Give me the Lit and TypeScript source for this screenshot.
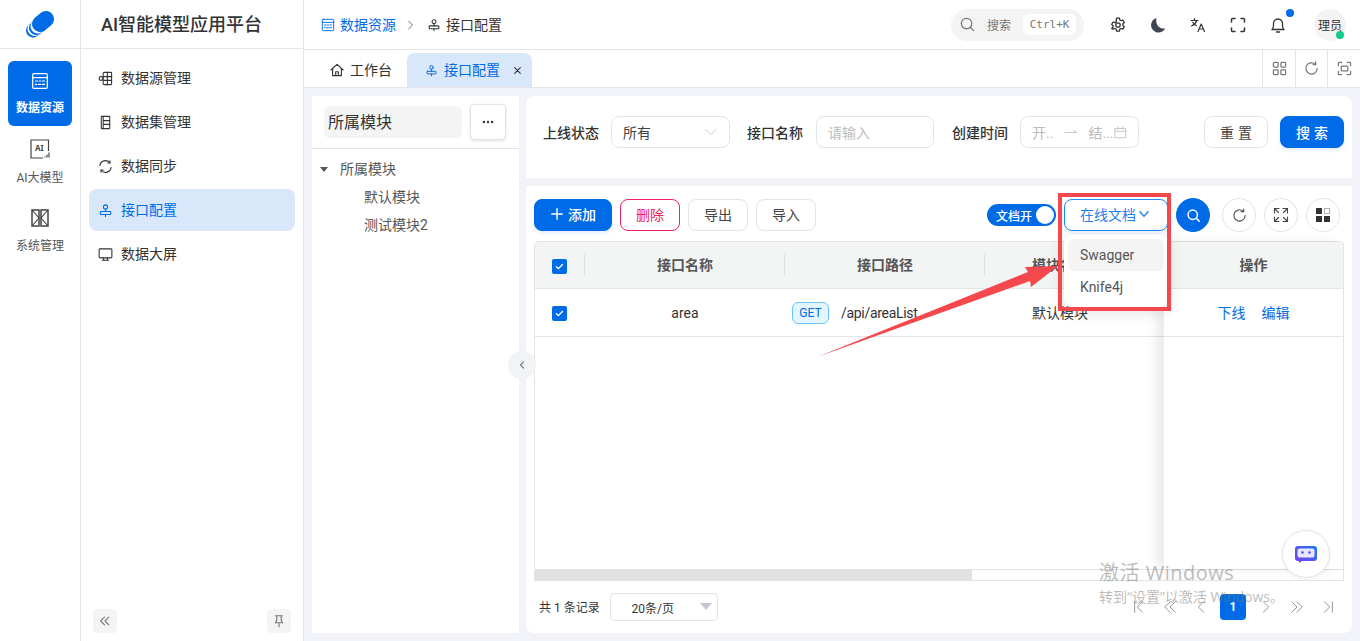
import { LitElement, css, html, svg } from "lit";
import { customElement } from "lit/decorators.js";

const ic = (size: number, body: unknown, sw = 1.3) => html`<svg class="ic" width=${size} height=${size} viewBox="0 0 16 16" fill="none" stroke="currentColor" stroke-width=${sw} stroke-linecap="round" stroke-linejoin="round">${body}</svg>`;

const dataIcon = svg`<rect x="1.5" y="1.5" width="13" height="13" rx="1"/><path d="M1.5 5h13"/><path d="M4 8h2M7.5 8h1M10 8h2M4 11h1M6.5 11h2M10 11h2"/>`;
const apiIcon = svg`<circle cx="8" cy="4.2" r="2.2"/><rect x="2.500" y="9" width="11" height="3.200" rx=".5"/><path d="M8 6.400V9M8 12.200v2.300"/>`;

@customElement("app-root")
export class AppRoot extends LitElement {
  static styles = css`
    :host {
      display: block;
      width: 1360px;
      height: 641px;
      position: relative;
      overflow: hidden;
      background: #fff;
      color: #333;
      font-family: Roboto, "Noto Sans CJK SC", sans-serif;
      font-size: 14px;
    }
    .ic { display: block; flex: none; }
    .page { display: flex; height: 641px; }
    .up { padding-bottom: 2px; }

    /* rail */
    .rail { width: 80px; border-right: 1px solid #e4e4e7; flex: none; }
    .logo { height: 48px; border-bottom: 1px solid #e4e4e7; display: flex; align-items: center; justify-content: center; }
    .rail-list { padding: 12px 8px 0; display: flex; flex-direction: column; gap: 3px; }
    .rail-item { height: 65px; box-sizing: border-box; padding-top: 2px; border-radius: 6px; display: flex; flex-direction: column; align-items: center; justify-content: center; gap: 11px; font-size: 12px; color: #555; line-height: 16px; }
    .rail-item.on { background: #006be6; color: #fff; font-weight: 700; gap: 10px; padding-top: 0; }
    .rail-item.sys { margin-top: 1px; }

    /* submenu */
    .sub { width: 222px; border-right: 1px solid #e4e4e7; flex: none; display: flex; flex-direction: column; }
    .brand { height: 49px; box-sizing: border-box; border-bottom: 1px solid #e4e4e7; padding: 0 0 2px 20px; display: flex; align-items: center; font-size: 18px; font-weight: 500; color: #333; }
    .menu { padding: 8px 8px 0; display: flex; flex-direction: column; gap: 2px; flex: 1; }
    .menu-item { height: 42px; border-radius: 8px; padding-left: 9px; display: flex; align-items: center; gap: 8px; color: #333; }
    .menu-item.on { background: #d9e7fa; color: #006be6; }
    .sub-foot { display: flex; justify-content: space-between; padding: 0 12px 8px; }
    .foot-btn { width: 24px; height: 24px; border-radius: 4px; background: #f4f4f5; display: flex; align-items: center; justify-content: center; color: #777; }

    /* main */
    .main { flex: 1; min-width: 0; display: flex; flex-direction: column; background: #f1f3f8; }
    .top { height: 49px; background: #fff; border-bottom: 1px solid #e4e4e7; flex: none; display: flex; align-items: center; padding: 0 14px 0 17px; }
    .crumb { display: flex; align-items: center; gap: 5px; }
    .crumb.blue { color: #006be6; }
    .crumb-sep { margin: 0 10px 0 9px; color: #666; }
    .search { margin-left: auto; width: 133px; height: 32px; border-radius: 16px; background: #f4f4f5; display: flex; align-items: center; padding-left: 9px; box-sizing: border-box; color: #777; font-size: 12px; }
    .search span { margin-left: 12px; }
    .kbd { margin-left: 12px; width: 53px; height: 21px; border-radius: 6px; background: #fff; font-family: "DejaVu Sans Mono", monospace; font-size: 11px; display: flex; align-items: center; justify-content: center; }
    .tools { display: flex; align-items: center; margin-left: 14px; }
    .tool { width: 40px; height: 32px; display: flex; align-items: center; justify-content: center; position: relative; color: #333; }
    .dot { position: absolute; width: 8px; height: 8px; border-radius: 50%; background: #006be6; top: 0; right: 4px; }
    .avatar { width: 32px; height: 32px; border-radius: 50%; background: #f4f4f5; margin-left: 16px; font-size: 12px; display: flex; align-items: center; justify-content: center; position: relative; }
    .online { position: absolute; width: 8px; height: 8px; border-radius: 50%; background: #0fcf8a; right: 2px; bottom: 2px; }

    .tabs { height: 37px; background: #fff; border-bottom: 1px solid #e4e4e7; flex: none; display: flex; align-items: flex-end; }
    .tab { height: 34px; display: flex; align-items: center; gap: 6px; }
    .tab.home { padding-left: 26px; width: 103px; box-sizing: border-box; }
    .tab.on { width: 125px; padding-left: 18px; box-sizing: border-box; background: #d9e7fa; color: #006be6; border-radius: 8px 8px 0 0; }
    .tab-x { margin-left: 7px; color: #333; }
    .tab-tools { margin-left: auto; display: flex; height: 37px; }
    .tab-tool { width: 32px; box-sizing: border-box; border-left: 1px solid #e4e4e7; display: flex; align-items: center; justify-content: center; color: #777; }
    .tab-tool:first-child, .tab-tool:last-child { width: 33px; }

    .content { flex: 1; min-height: 0; padding: 8px; display: flex; gap: 7px; }
    .left { width: 207px; background: #fff; flex: none; }
    .left-head { height: 52px; border-bottom: 1px solid #e4e4e7; display: flex; align-items: center; padding: 0 12px; gap: 8px; }
    .mod { width: 138px; height: 32px; box-sizing: border-box; border-radius: 6px; background: #f4f4f5; font-size: 16px; padding: 0 0 2px 4px; display: flex; align-items: center; }
    .more { width: 36px; height: 36px; box-sizing: border-box; background: #fff; border: 1px solid #e4e4e7; border-radius: 4px; box-shadow: 0 1px 3px rgba(0,0,0,.12); display: flex; align-items: center; justify-content: center; }
    .tree { padding-top: 6px; color: #555; }
    .node { height: 28px; box-sizing: border-box; display: flex; align-items: center; }
    .node.root { padding-left: 8px; gap: 12px; }
    .node.leaf { padding: 0 0 2px 52px; }
    .caret { width: 0; height: 0; border: 4px solid transparent; border-top: 5px solid #555; border-bottom: 0; }

    .right { flex: 1; min-width: 0; display: flex; flex-direction: column; gap: 8px; }
    .filter { height: 82px; background: #fff; border-radius: 8px 8px 0 0; display: flex; align-items: center; padding: 0 8px 10px 17px; box-sizing: border-box; }
    .flabel { font-weight: 500; color: #333; margin-right: 12px; }
    .flabel.api { margin-right: 13px; }
    .field { height: 32px; box-sizing: border-box; border: 1px solid #e4e4e7; border-radius: 8px; display: flex; align-items: center; padding: 0 11px; }
    .field.sel { width: 119px; margin-right: 17px; justify-content: space-between; color: #444; }
    .field.sel .ic { color: #c0c4cc; }
    .field.name { width: 118px; margin-right: 18px; color: #bbb; }
    .field.date { width: 119px; color: #bbb; }
    .date-arrow { margin: 0 10px 0 11px; }
    .date-cal { margin-left: auto; }
    .btn { height: 32px; box-sizing: border-box; border-radius: 8px; border: 1px solid #e4e4e7; background: #fff; display: flex; align-items: center; justify-content: center; color: #444; }
    .btn.primary { background: #006be6; border-color: #006be6; color: #fff; font-weight: 500; box-shadow: 0 2px 4px rgba(0,107,230,.12); }
    .btn.danger { border-color: #f0205f; color: #f0205f; }
    .wide { width: 64px; letter-spacing: 4px; text-indent: 4px; }
    .reset { margin-left: auto; margin-right: 12px; }

    .card { flex: 1; min-height: 0; background: #fff; border-radius: 0 0 8px 8px; padding: 13px 8px 0; display: flex; flex-direction: column; }
    .bar { height: 32px; flex: none; display: flex; align-items: center; gap: 8px; padding-right: 4px; }
    .bar .btn { padding-bottom: 2px; }
    .add { width: 78px; gap: 4px; }
    .w60 { width: 60px; }
    .switch { margin-left: auto; width: 69px; height: 22px; border-radius: 11px; background: #006be6; color: #fff; font-size: 12px; font-weight: 500; display: flex; align-items: center; padding: 0 2px 0 9px; box-sizing: border-box; justify-content: space-between; }
    .knob { width: 18px; height: 18px; border-radius: 50%; background: #fff; }
    .doc { width: 104px; padding-right: 2px; border-color: #1f8bf0; color: #1f80ee; gap: 2px; box-shadow: 0 2px 6px rgba(0,107,230,.1); }
    .circle { width: 34px; height: 34px; border-radius: 50%; box-sizing: border-box; border: 1px solid #e4e4e7; background: #fff; display: flex; align-items: center; justify-content: center; color: #444; }
    .circle.solid { background: #006be6; border-color: #006be6; color: #fff; }
    .circles { display: flex; gap: 8px; margin-left: 4px; }

    .table { margin-top: 10px; height: 340px; flex: none; border: 1px solid #e4e4e7; border-radius: 4px 4px 0 0; box-sizing: border-box; position: relative; display: flex; flex-direction: column; }
    .tbody { flex: 1; min-height: 0; display: flex; border-bottom: 1px solid #e4e4e7; }
    .scroll { flex: 1; min-width: 0; overflow: hidden; }
    .row { display: grid; grid-template-columns: 50px 200px 200px 150px; align-items: center; border-bottom: 1px solid #e4e4e7; height: 48px; box-sizing: border-box; }
    .row.head { background: #f3f4f4; height: 47px; font-weight: 600; color: #555; }
    .cell { display: flex; align-items: center; justify-content: center; height: 100%; box-sizing: border-box; }
    .cell.pick { padding-right: 1px; }
    .cell.raise { padding-bottom: 2px; }
    .head .cell { position: relative; padding-bottom: 2px; }
    .head .cell.sep::after { content: ""; position: absolute; right: 0; top: 12px; bottom: 12px; width: 1px; background: #e0e3e3; }
    .cell.path { justify-content: flex-start; padding-left: 7px; gap: 12px; }
    .url { letter-spacing: -.3px; }
    .fixed { width: 179px; flex: none; background: #fff; box-shadow: -8px 0 10px rgba(0,0,0,.08); position: relative; }
    .fixed .row { grid-template-columns: 1fr; }
    .ops { color: #006be6; gap: 16px; }
    .check { width: 15px; height: 15px; margin-top: 2px; border-radius: 2px; background: #006be6; display: flex; align-items: center; justify-content: center; color: #fff; }
    .head .check { margin-top: 4px; }
    .tag { height: 22px; width: 37px; box-sizing: border-box; border: 1px solid #6fc3ff; background: #e3f5ff; color: #006be6; border-radius: 6px; font-size: 12px; display: flex; align-items: center; justify-content: center; }
    .hscroll { height: 10px; flex: none; }
    .thumb { width: 437px; height: 10px; background: #e1e1e3; }

    .pager { flex: 1; display: flex; align-items: center; font-size: 12px; padding: 0 1px 0 5px; color: #333; }
    .psize { margin-left: 10px; width: 108px; height: 28px; box-sizing: border-box; border: 1px solid #e4e4e7; border-radius: 4px; padding-right: 22px; display: flex; align-items: center; justify-content: center; position: relative; }
    .psize::after { content: ""; position: absolute; right: 5px; top: 9px; border: 6px solid transparent; border-top: 7px solid #c2c6cf; border-bottom: 0; }
    .pages { margin-left: auto; display: flex; align-items: center; color: #888; }
    .pg { width: 31px; height: 26px; display: flex; align-items: center; justify-content: center; }
    .pg.cur { width: 26px; margin: 0 4px; border-radius: 4px; background: #006be6; color: #fff; font-weight: 700; }

    /* floating things */
    .drop { position: absolute; left: 1064px; top: 235px; width: 104px; height: 72px; box-sizing: border-box; padding: 4px; background: #fff; border-radius: 8px; box-shadow: 0 4px 16px rgba(0,0,0,.14); color: #555; }
    .drop div { height: 32px; border-radius: 6px; padding-left: 12px; display: flex; align-items: center; }
    .drop .hover { background: #f4f4f5; }
    .mark { position: absolute; left: 1058px; top: 193px; width: 113px; height: 118px; box-sizing: border-box; border: 4px solid #f5484d; pointer-events: none; }
    .arrow { position: absolute; left: 0; top: 0; pointer-events: none; }
    .handle { position: absolute; left: 508px; top: 351px; width: 28px; height: 28px; border-radius: 50%; background: #f1f3f5; display: flex; align-items: center; justify-content: center; color: #777; }
    .chat { position: absolute; left: 1282px; top: 530px; width: 48px; height: 48px; box-sizing: border-box; border-radius: 50%; background: #fff; border: 1px solid #e4e4e7; box-shadow: 0 1px 4px rgba(0,0,0,.06); display: flex; align-items: center; justify-content: center; }
    .wm { position: absolute; left: 1099px; top: 559px; color: rgba(120,120,120,.5); pointer-events: none; font-family: "Open Sans", "Noto Sans CJK SC", sans-serif; }
    .wm .a { font-size: 20px; line-height: 28px; letter-spacing: .5px; }
    .wm .b { font-size: 14px; line-height: 20px; }
  `;

  render() {
    const check = html`<span class="check">${ic(11, svg`<path d="M3.5 8.3l3 2.8 5.8-6"/>`, 2)}</span>`;
    const menu = [
      ["数据源管理", svg`<rect x="5.5" y="1.5" width="9" height="13" rx="1"/><path d="M10 1.5v13M5.5 6h9M5.5 10h9"/><circle cx="3.2" cy="8" r="2"/>`],
      ["数据集管理", svg`<rect x="3.500" y="1.5" width="9" height="13" rx=".6"/><path d="M5.500 1.5v13M5.500 6H12.500M5.500 10H12.500"/>`],
      ["数据同步", svg`<path d="M2 7a6 6 0 0 1 10.6-3M14 9a6 6 0 0 1-10.6 3"/><path d="M12.8 1.8v2.4h-2.4M3.2 14.2v-2.4h2.4"/>`],
      ["接口配置", apiIcon],
      ["数据大屏", svg`<rect x="1.2" y="2" width="13.6" height="9.6" rx="1"/><path d="M6 11.6v2.6M10 11.6v2.6M4.5 14.2h7"/>`],
    ] as const;
    return html`
      <div class="page">
        <aside class="rail">
          <div class="logo">
            <svg width="28" height="28" viewBox="0 0 28 28" fill="none" stroke-linecap="round">
              <path d="M7 20.500l5-4" stroke="#006be6" stroke-width="14"/>
              <path d="M8.500 19l5-4" stroke="#fff" stroke-width="14"/>
              <path d="M10 18l5-4" stroke="#006be6" stroke-width="14"/>
              <path d="M11.500 16.500l5-4" stroke="#fff" stroke-width="14"/>
              <path d="M14 14l6-5" stroke="#006be6" stroke-width="16"/>
            </svg>
          </div>
          <div class="rail-list">
            <div class="rail-item on">${ic(18, dataIcon, 1.1)}<span>数据资源</span></div>
            <div class="rail-item">
              <svg width="20" height="20" viewBox="0 0 20 20" fill="none" stroke="#444" stroke-width="1.2"><path d="M18.500 12V1H1v18h12"/><text x="5" y="12" font-size="8" font-weight="700" fill="#444" stroke="none" font-family="Noto Sans">AI</text><path d="M15 18.500v-1M17 18.500v-3M19 18.500v-5"/></svg>
              <span>AI大模型</span>
            </div>
            <div class="rail-item sys">
              <svg width="18" height="18" viewBox="0 0 18 18" fill="none" stroke="#444"><rect x="1" y="1" width="7" height="16" stroke-width="1.500"/><rect x="10" y="1" width="7" height="16" stroke-width="1.500"/><path d="M1 1l7 8-7 8M17 1l-7 8 7 8" stroke-width="1.100"/></svg>
              <span>系统管理</span>
            </div>
          </div>
        </aside>

        <aside class="sub">
          <div class="brand">AI智能模型应用平台</div>
          <nav class="menu">
            ${menu.map(([t, i]) => html`<div class="menu-item ${t === "接口配置" ? "on" : ""}">${ic(15, i, 1.150)}<span class="up">${t}</span></div>`)}
          </nav>
          <div class="sub-foot">
            <div class="foot-btn">${ic(14, svg`<path d="M7.500 3.500L3 8l4.500 4.500M12.500 3.500L8 8l4.500 4.500"/>`)}</div>
            <div class="foot-btn">${ic(14, svg`<path d="M4 2h8M5.500 2v5L4 10h8l-1.500-3V2M8 10v4.500"/>`)}</div>
          </div>
        </aside>

        <main class="main">
          <header class="top">
            <div class="crumb blue">${ic(14, dataIcon, 1.1)}<span class="up">数据资源</span></div>
            <div class="crumb-sep">${ic(12, svg`<path d="M5 3l5 5-5 5"/>`)}</div>
            <div class="crumb">${ic(14, apiIcon, 1.2)}<span class="up">接口配置</span></div>
            <div class="search">
              ${ic(15, svg`<circle cx="7" cy="7" r="5.600"/><path d="M11.200 11.200L14.500 14.500"/>`)}
              <span>搜索</span>
              <div class="kbd">Ctrl+K</div>
            </div>
            <div class="tools">
              <div class="tool">${ic(16, svg`<path d="M6.600 1.500h2.800l.4 1.900 1.300.7 1.800-.6 1.400 2.400-1.400 1.300v1.600l1.400 1.300-1.400 2.400-1.800-.6-1.300.7-.4 1.900H6.600l-.4-1.900-1.300-.7-1.800.6L1.700 12l1.400-1.300V9.100L1.700 7.800l1.400-2.400 1.800.6 1.300-.7z" transform="translate(0 -.4)"/><circle cx="8" cy="8" r="2.200"/>`)}</div>
              <div class="tool"><svg width="16" height="16" viewBox="0 0 16 16"><path d="M6.500 1a7.400 7.400 0 1 0 8.600 10.400C10 12.500 5 8 6.500 1z" fill="#3f4652"/></svg></div>
              <div class="tool">${ic(16, svg`<path d="M1 3.500h7M4.500 1.500v2M6.800 3.500C6 6 4 8 1.500 9M2.800 5.200c.8 1.600 2 2.800 3.600 3.400M8 14.500l3.200-7.500 3.300 7.500M9.200 12h4"/>`, 1.2)}</div>
              <div class="tool">${ic(16, svg`<path d="M1.500 5V2.500a1 1 0 0 1 1-1H5M11 1.500h2.500a1 1 0 0 1 1 1V5M14.500 11v2.500a1 1 0 0 1-1 1H11M5 14.500H2.500a1 1 0 0 1-1-1V11"/>`, 1.5)}</div>
              <div class="tool">${ic(16, svg`<path d="M2 12.500h12c-1-1-1.500-2-1.500-4V6.500a4.500 4.500 0 0 0-9 0v2c0 2-.5 3-1.500 4zM6.500 15h3"/>`)}<i class="dot"></i></div>
            </div>
            <div class="avatar">理员<i class="online"></i></div>
          </header>

          <div class="tabs">
            <div class="tab home">${ic(14, svg`<path d="M1 8l7-6.500L15 8M3 6.500V14.500h10V6.500M6.500 14.500V10h3v4.500"/>`)}<span class="up">工作台</span></div>
            <div class="tab on">${ic(13, apiIcon, 1.2)}<span class="up">接口配置</span><span class="tab-x">${ic(9, svg`<path d="M3 3l10 10M13 3L3 13"/>`, 2)}</span></div>
            <div class="tab-tools">
              <div class="tab-tool">${ic(15, svg`<rect x="1.500" y="1.500" width="5" height="5" rx=".8"/><rect x="9.500" y="1.500" width="5" height="5" rx=".8"/><rect x="1.500" y="9.500" width="5" height="5" rx=".8"/><rect x="9.500" y="9.500" width="5" height="5" rx=".8"/>`)}</div>
              <div class="tab-tool">${ic(15, svg`<path d="M14 8a6 6 0 1 1-2-4.500M12.500 1v3h-3"/>`)}</div>
              <div class="tab-tool">${ic(15, svg`<path d="M1.500 5V2.500a1 1 0 0 1 1-1H5M11 1.500h2.500a1 1 0 0 1 1 1V5M14.500 11v2.500a1 1 0 0 1-1 1H11M5 14.500H2.500a1 1 0 0 1-1-1V11"/><rect x="4.500" y="5.500" width="7" height="5" rx=".5"/>`)}</div>
            </div>
          </div>

          <div class="content">
            <section class="left">
              <div class="left-head">
                <div class="mod">所属模块</div>
                <div class="more"><svg width="12" height="4" viewBox="0 0 12 4" fill="#333"><circle cx="2" cy="2" r="1.200"/><circle cx="6" cy="2" r="1.200"/><circle cx="10" cy="2" r="1.200"/></svg></div>
              </div>
              <div class="tree">
                <div class="node root"><i class="caret"></i><span class="up">所属模块</span></div>
                <div class="node leaf">默认模块</div>
                <div class="node leaf">测试模块2</div>
              </div>
            </section>

            <section class="right">
              <div class="filter">
                <span class="flabel">上线状态</span>
                <div class="field sel"><span>所有</span>${ic(14, svg`<path d="M2 5l6 6 6-6"/>`, 1)}</div>
                <span class="flabel api">接口名称</span>
                <div class="field name">请输入</div>
                <span class="flabel">创建时间</span>
                <div class="field date">
                  <span>开..</span>
                  <span class="date-arrow">${ic(14, svg`<path d="M1 8.500h13M11 6l3 2.500"/>`, 1)}</span>
                  <span>结...</span>
                  <span class="date-cal">${ic(13, svg`<rect x="1.500" y="3" width="13" height="11.500"/><path d="M1.500 6.500h13M5 1v3M11 1v3"/>`, 1)}</span>
                </div>
                <div class="btn wide reset">重置</div>
                <div class="btn wide primary">搜索</div>
              </div>

              <div class="card">
                <div class="bar">
                  <div class="btn primary add">${ic(14, svg`<path d="M8 2v12M2 8h12"/>`, 1.600)}<span>添加</span></div>
                  <div class="btn danger w60">删除</div>
                  <div class="btn w60">导出</div>
                  <div class="btn w60">导入</div>
                  <div class="switch"><span>文档开</span><i class="knob"></i></div>
                  <div class="btn doc"><span>在线文档</span>${ic(12, svg`<path d="M2.500 5l5.500 6 5.500-6"/>`, 1.800)}</div>
                  <div class="circle solid">${ic(15, svg`<circle cx="7.200" cy="7.200" r="5"/><path d="M11 11l3 3"/>`, 1.600)}</div>
                  <div class="circles">
                    <div class="circle">${ic(15, svg`<path d="M14 8a6 6 0 1 1-2-4.500M12.500 1v3h-3"/>`, 1.100)}</div>
                    <div class="circle">${ic(16, svg`<path d="M1.500 6V1.500H6M1.500 1.500l4 4M10 1.500h4.500V6M14.500 1.500l-4 4M1.500 10v4.500H6M1.500 14.500l4-4M10 14.500h4.500V10M14.500 14.500l-4-4"/>`, 1.100)}</div>
                    <div class="circle"><svg width="16" height="16" viewBox="0 0 16 16" fill="#333"><rect x="1" y="1" width="6" height="6"/><rect x="1" y="9" width="6" height="6"/><rect x="9" y="9" width="6" height="6"/><rect x="9.500" y="1.500" width="5" height="5" fill="none" stroke="#666" stroke-dasharray="1 1"/></svg></div>
                  </div>
                </div>

                <div class="table">
                  <div class="tbody">
                    <div class="scroll">
                      <div class="row head">
                        <div class="cell pick sep">${check}</div>
                        <div class="cell sep">接口名称</div>
                        <div class="cell sep">接口路径</div>
                        <div class="cell">模块名称</div>
                      </div>
                      <div class="row">
                        <div class="cell pick">${check}</div>
                        <div class="cell">area</div>
                        <div class="cell path"><span class="tag">GET</span><span class="url">/api/areaList</span></div>
                        <div class="cell raise">默认模块</div>
                      </div>
                    </div>
                    <div class="fixed">
                      <div class="row head"><div class="cell">操作</div></div>
                      <div class="row"><div class="cell ops raise"><span>下线</span><span>编辑</span></div></div>
                    </div>
                  </div>
                  <div class="hscroll"><div class="thumb"></div></div>
                </div>

                <div class="pager">
                  <span class="up">共 1 条记录</span>
                  <div class="psize">20条/页</div>
                  <div class="pages">
                    <div class="pg">${ic(14, svg`<path d="M3 2v12M12 2L6 8l6 6"/>`, 1)}</div>
                    <div class="pg">${ic(14, svg`<path d="M8 2L2 8l6 6M14 2L8 8l6 6"/>`, 1)}</div>
                    <div class="pg">${ic(14, svg`<path d="M11 2L5 8l6 6"/>`, 1)}</div>
                    <div class="pg cur">1</div>
                    <div class="pg">${ic(14, svg`<path d="M5 2l6 6-6 6"/>`, 1)}</div>
                    <div class="pg">${ic(14, svg`<path d="M2 2l6 6-6 6M8 2l6 6-6 6"/>`, 1)}</div>
                    <div class="pg">${ic(14, svg`<path d="M4 2l6 6-6 6M13 2v12"/>`, 1)}</div>
                  </div>
                </div>
              </div>
            </section>
          </div>
        </main>
      </div>

      <div class="handle">${ic(10, svg`<path d="M10.500 3L5.500 8l5 5"/>`, 1.800)}</div>
      <div class="drop"><div class="hover">Swagger</div><div>Knife4j</div></div>
      <svg class="arrow" width="1360" height="641" viewBox="0 0 1360 641"><polygon points="817,357 1028,272 1025,267 1058,266 1031,287 1030,281" fill="#f5484d"/></svg>
      <div class="mark"></div>
      <div class="chat">
        <svg width="22" height="17" viewBox="0 0 22 17">
          <defs><linearGradient id="cg" x1="1" y1="0" x2="0" y2="1"><stop offset="0" stop-color="#1e7bf2"/><stop offset="1" stop-color="#7a3ff2"/></linearGradient></defs>
          <path d="M3 0h16a3 3 0 0 1 3 3v9a3 3 0 0 1-3 3H7l-3 2v-2H3a3 3 0 0 1-3-3V3a3 3 0 0 1 3-3z" fill="url(#cg)"/>
          <rect x="2.500" y="2.500" width="17" height="9" rx="2" fill="#e9e6ff"/>
          <circle cx="7.500" cy="6.500" r="1.300" fill="#4a55e8"/><circle cx="14.500" cy="6.500" r="1.300" fill="#4a55e8"/>
        </svg>
      </div>
      <div class="wm"><div class="a">激活 Windows</div><div class="b">转到“设置”以激活 Windows。</div></div>
    `;
  }
}
